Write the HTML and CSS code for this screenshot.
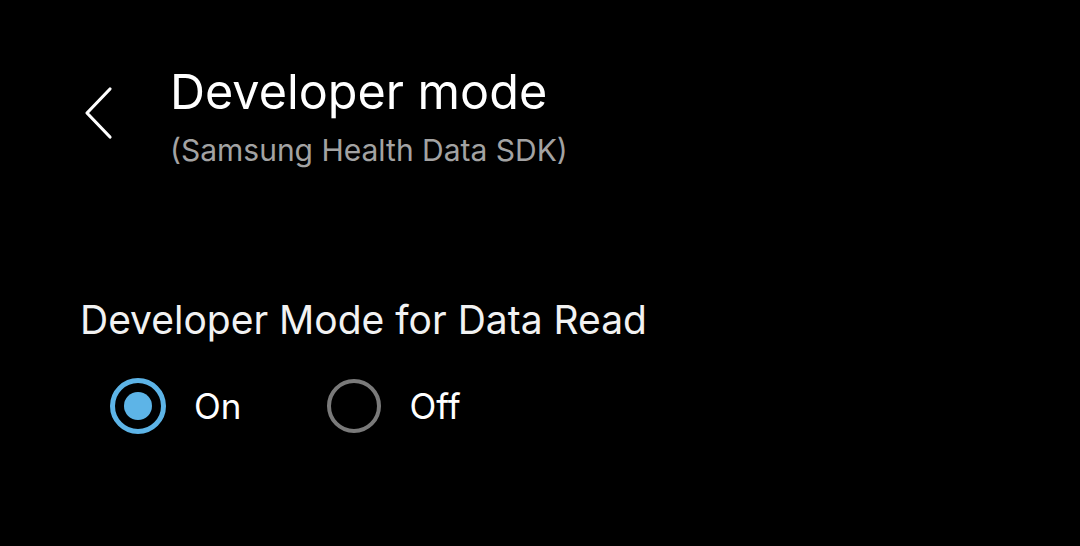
FILE: index.html
```html
<!DOCTYPE html>
<html>
<head>
<meta charset="utf-8">
<link rel="stylesheet" href="styles.css">
</head>
<body>
<div class="screen">
  <header class="header">
    <div class="back">
      <svg width="34" height="54" viewBox="0 0 34 54"><polyline points="28,3 5,27 28,51" fill="none" stroke="#fff" stroke-width="3.2" stroke-linecap="round" stroke-linejoin="round"/></svg>
    </div>
    <div class="titles">
      <div class="title">Developer mode</div>
      <div class="subtitle">(Samsung Health Data SDK)</div>
    </div>
  </header>
  <section class="setting">
    <div class="label">Developer Mode for Data Read</div>
    <div class="options">
      <div class="option">
        <span class="radio on"><span class="dot"></span></span>
        <span class="opt-text">On</span>
      </div>
      <div class="option">
        <span class="radio off"></span>
        <span class="opt-text">Off</span>
      </div>
    </div>
  </section>
</div>
</body>
</html>
```
FILE: styles.css
```css
html, body {
  margin: 0;
  padding: 0;
  background: #000;
}
.screen {
  width: 1080px;
  height: 546px;
  background: #000;
  color: #fff;
  font-family: Inter, Roboto, "Noto Sans", sans-serif;
  overflow: hidden;
}
.header {
  display: flex;
  align-items: flex-start;
  padding: 62px 0 0 82px;
}
.back {
  width: 88px;
  padding-top: 24px;
}
.back svg { display: block; }
.titles {
  display: flex;
  flex-direction: column;
}
.title {
  font-size: 48.5px;
  line-height: 60px;
  font-weight: 400;
}
.subtitle {
  font-size: 30px;
  line-height: 40px;
  color: #a3a3a3;
  margin-top: 8px;
}
.setting {
  padding: 126px 0 0 80px;
}
.label {
  font-size: 39px;
  line-height: 48px;
  color: #f2f2f2;
}
.options {
  display: flex;
  align-items: center;
  padding: 34px 0 0 30px;
}
.option {
  display: flex;
  align-items: center;
  margin-right: 86px;
}
.radio {
  width: 56px;
  height: 56px;
  box-sizing: border-box;
  border-radius: 50%;
  display: flex;
  align-items: center;
  justify-content: center;
}
.radio.on {
  border: 5px solid #5db4e7;
}
.radio.on .dot {
  width: 28px;
  height: 28px;
  border-radius: 50%;
  background: #5db4e7;
}
.radio.off {
  width: 54px;
  height: 54px;
  border: 4px solid #7a7a7a;
}
.opt-text {
  font-size: 35px;
  margin-left: 28px;
}
```
